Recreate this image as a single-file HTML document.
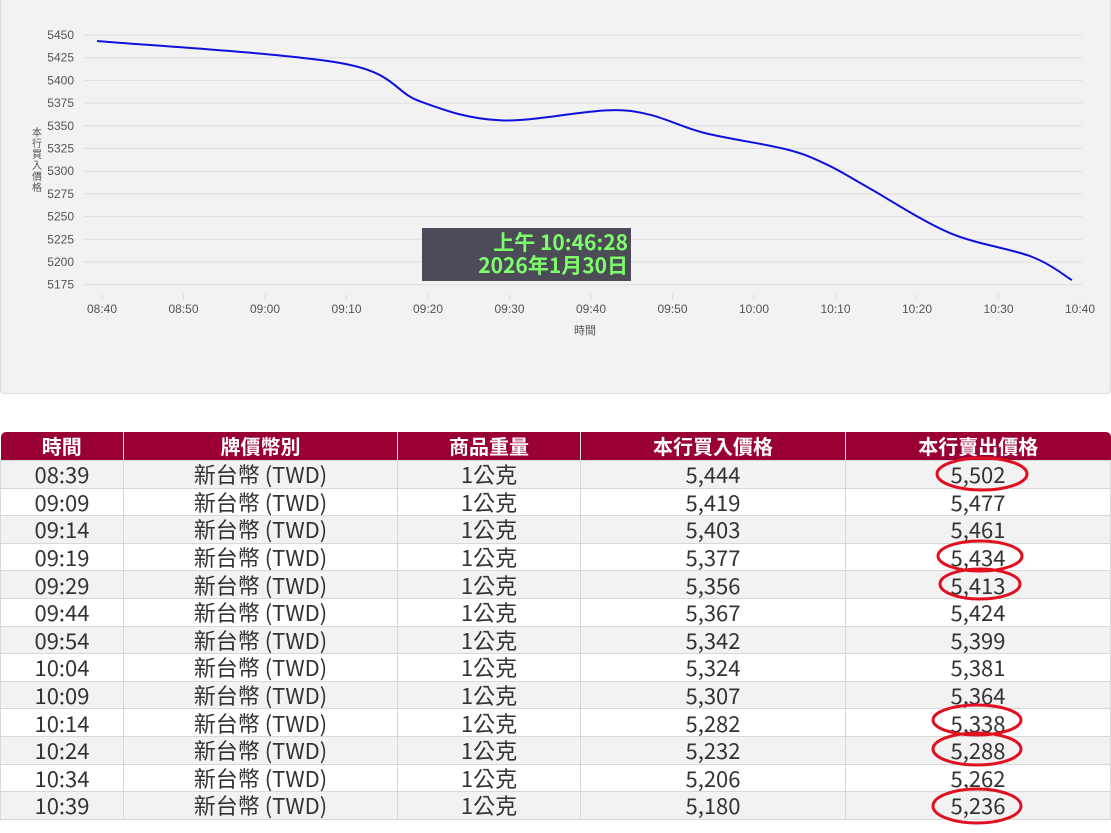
<!DOCTYPE html>
<html><head><meta charset="utf-8"><style>
body{margin:0;width:1111px;height:833px;background:#fff;overflow:hidden;position:relative;font-family:"Liberation Sans","Noto Sans CJK TC",sans-serif}
#chart{position:absolute;left:0;top:-4px;width:1109px;height:396px;background:#f2f2f2;border:1px solid #ddd;border-radius:4px}
table{position:absolute;left:0;top:432px;width:1111px;border-collapse:collapse;table-layout:fixed;font-family:"Noto Sans CJK TC","Liberation Sans",sans-serif}
th{background:#9a0036;color:#fff;font-size:20px;height:28px;padding:0;line-height:28px;border-left:1px solid #ddd}
td{height:26.6px;padding:0;text-align:center;font-size:22px;color:#333;line-height:26px;border:1px solid #d8d8d8}
tr:nth-child(even) td{background:#f2f2f2}
th:first-child{border-top-left-radius:5px;border-left:none}th:last-child{border-top-right-radius:5px}
.tip{position:absolute;left:422px;top:228px;width:209px;height:53px;background:#4c4b57;color:#7dff6a;font-weight:bold;font-size:21px;line-height:23px;text-align:right;box-sizing:border-box;padding:3px 3px;font-family:"Noto Sans CJK TC",sans-serif}
</style></head><body>
<div id="chart"></div>
<svg width="1111" height="400" style="position:absolute;left:0;top:0" font-family="Liberation Sans, Noto Sans CJK TC, sans-serif">
<g stroke="#ddd" stroke-width="1" id="grid"></g>
<g font-size="12" fill="#555" text-anchor="end" id="ylab"></g>
<g font-size="12" fill="#555" text-anchor="middle" id="xlab"></g>
<text x="585" y="334" font-size="11" fill="#555" text-anchor="middle">時間</text>
<text font-size="10" fill="#555"><tspan x="32" y="136">本</tspan><tspan x="32" y="147">行</tspan><tspan x="32" y="158">買</tspan><tspan x="32" y="169">入</tspan><tspan x="32" y="180">價</tspan><tspan x="32" y="191">格</tspan></text>
<path id="line" fill="none" stroke="#1010dd" stroke-width="2" d="M97,41 L343,63.5 L419.9,101.3 L501.4,120.4 L623.6,110.4 L705.1,133.1 L786.6,149.4 L827.4,164.8 L868.1,187.5 L949.6,232.9 L1031.1,256.5 L1071.9,280.1"/>
</svg>
<div class="tip">上午 10:46:28<br>2026年1月30日</div>
<table>
<colgroup><col style="width:123px"><col style="width:274px"><col style="width:183px"><col style="width:265px"><col></colgroup>
<tr><th>時間</th><th>牌價幣別</th><th>商品重量</th><th>本行買入價格</th><th>本行賣出價格</th></tr>
<tr><td>08:39</td><td>新台幣 (TWD)</td><td>1公克</td><td>5,444</td><td>5,502</td></tr>
<tr><td>09:09</td><td>新台幣 (TWD)</td><td>1公克</td><td>5,419</td><td>5,477</td></tr>
<tr><td>09:14</td><td>新台幣 (TWD)</td><td>1公克</td><td>5,403</td><td>5,461</td></tr>
<tr><td>09:19</td><td>新台幣 (TWD)</td><td>1公克</td><td>5,377</td><td>5,434</td></tr>
<tr><td>09:29</td><td>新台幣 (TWD)</td><td>1公克</td><td>5,356</td><td>5,413</td></tr>
<tr><td>09:44</td><td>新台幣 (TWD)</td><td>1公克</td><td>5,367</td><td>5,424</td></tr>
<tr><td>09:54</td><td>新台幣 (TWD)</td><td>1公克</td><td>5,342</td><td>5,399</td></tr>
<tr><td>10:04</td><td>新台幣 (TWD)</td><td>1公克</td><td>5,324</td><td>5,381</td></tr>
<tr><td>10:09</td><td>新台幣 (TWD)</td><td>1公克</td><td>5,307</td><td>5,364</td></tr>
<tr><td>10:14</td><td>新台幣 (TWD)</td><td>1公克</td><td>5,282</td><td>5,338</td></tr>
<tr><td>10:24</td><td>新台幣 (TWD)</td><td>1公克</td><td>5,232</td><td>5,288</td></tr>
<tr><td>10:34</td><td>新台幣 (TWD)</td><td>1公克</td><td>5,206</td><td>5,262</td></tr>
<tr><td>10:39</td><td>新台幣 (TWD)</td><td>1公克</td><td>5,180</td><td>5,236</td></tr>
</table>
<svg width="1111" height="833" style="position:absolute;left:0;top:0" fill="none" stroke="#e01020" stroke-width="3">
<ellipse cx="982" cy="474" rx="45" ry="16"/>
<ellipse cx="980" cy="556" rx="42" ry="15"/>
<ellipse cx="980" cy="584" rx="40" ry="15"/>
<ellipse cx="977" cy="720" rx="44" ry="15"/>
<ellipse cx="977" cy="749" rx="44" ry="16"/>
<ellipse cx="977" cy="806" rx="44" ry="17"/>
</svg>
<script>
var ns="http://www.w3.org/2000/svg";
function el(p,t,a,txt){var e=document.createElementNS(ns,t);for(var k in a)e.setAttribute(k,a[k]);if(txt)e.textContent=txt;document.getElementById(p).appendChild(e);}
for(var i=0;i<12;i++){var v=5450-i*25,y=35+i*22.7;el("grid","line",{x1:84,x2:1082,y1:y,y2:y});el("ylab","text",{x:74,y:y+4},""+v);}
var xs=["08:40","08:50","09:00","09:10","09:20","09:30","09:40","09:50","10:00","10:10","10:20","10:30","10:40"];
for(var i=0;i<13;i++){var x=102+i*81.5;el("grid","line",{x1:x,x2:x,y1:294,y2:299});el("xlab","text",{x:x,y:313},xs[i]);}
var P=[[97,41],[343,63.5],[419.9,101.3],[501.4,120.4],[623.6,110.4],[705.1,133.1],[786.6,149.4],[827.4,164.8],[868.1,187.5],[949.6,232.9],[1031.1,256.5],[1071.9,280.1]];
var d="M"+P[0];for(var i=0;i<P.length-1;i++){var p0=P[Math.max(0,i-1)],p1=P[i],p2=P[i+1],p3=P[Math.min(P.length-1,i+2)];
d+=" C"+(p1[0]+(p2[0]-p0[0])/6)+","+(p1[1]+(p2[1]-p0[1])/6)+" "+(p2[0]-(p3[0]-p1[0])/6)+","+(p2[1]-(p3[1]-p1[1])/6)+" "+p2;}
document.getElementById("line").setAttribute("d",d);
</script>
</body></html>
